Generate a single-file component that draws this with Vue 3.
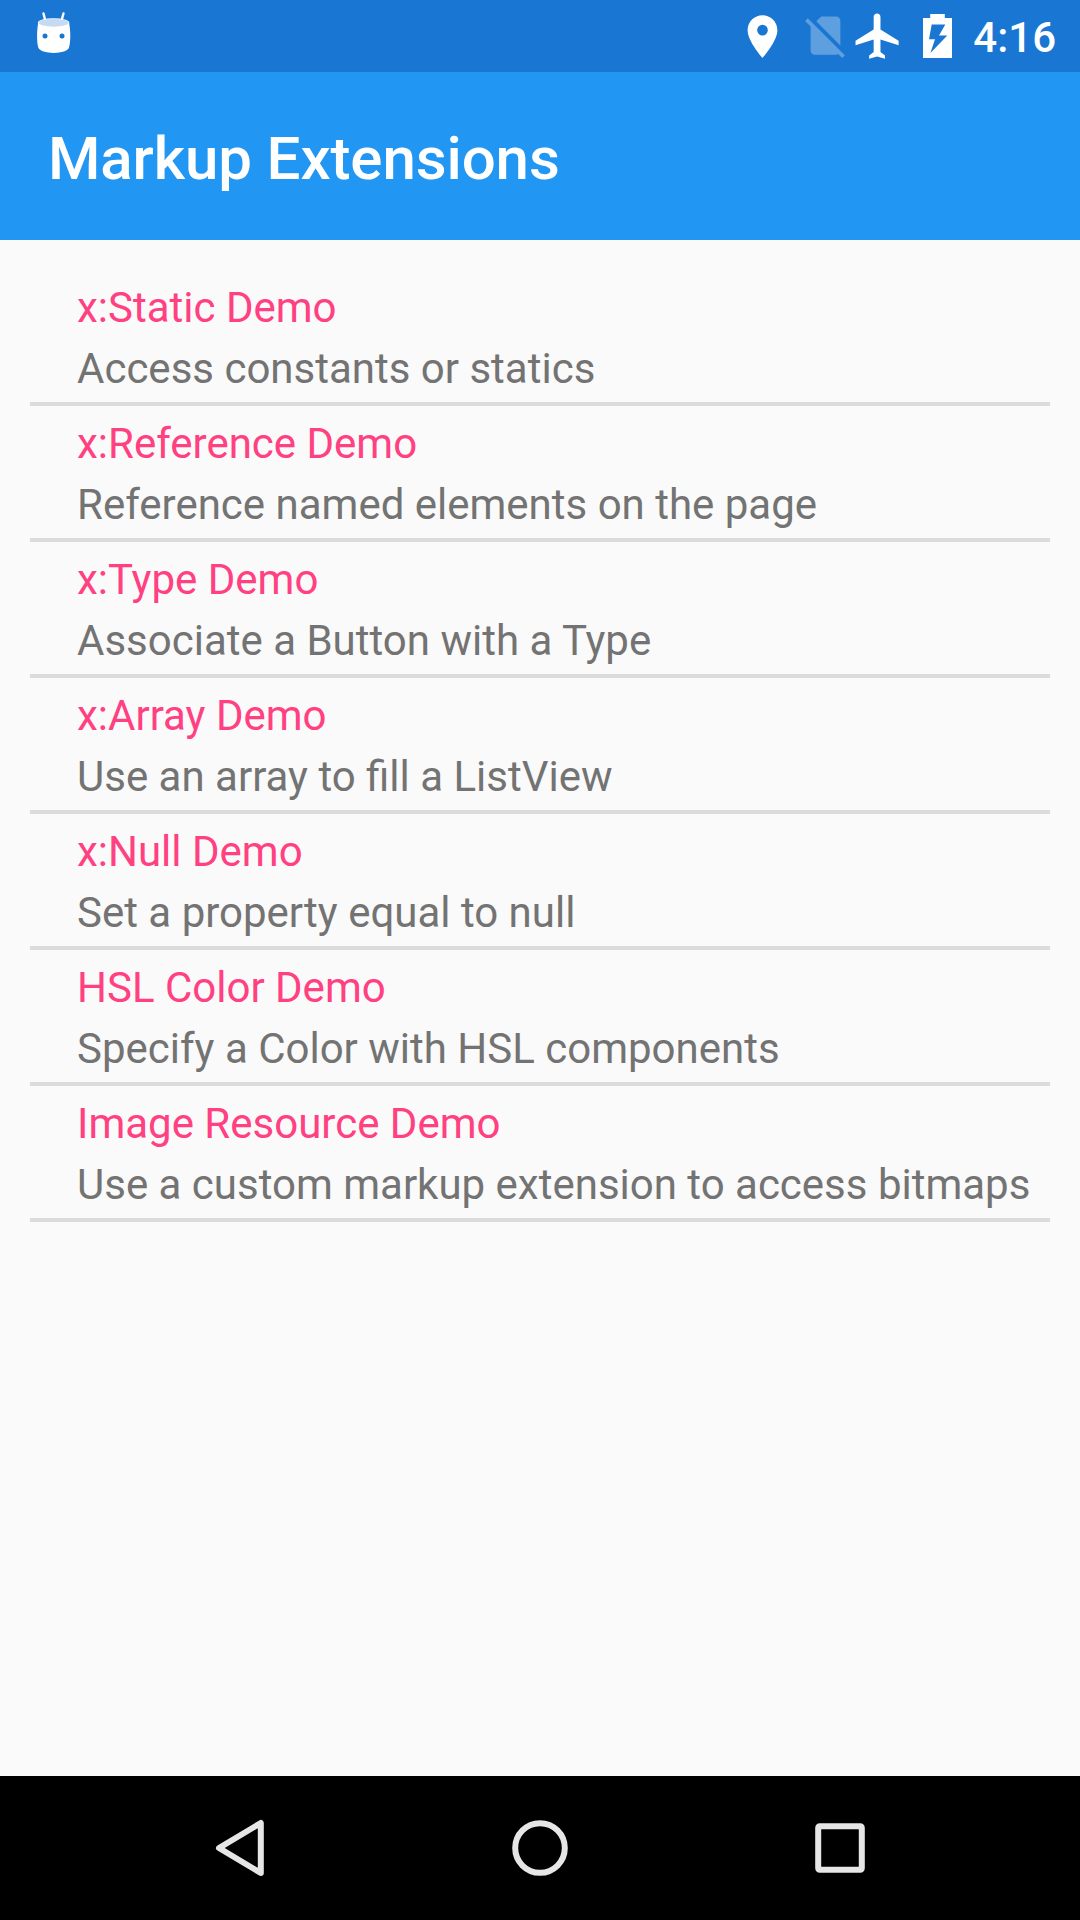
<script setup>
const demos = [
  { title: 'x:Static Demo', detail: 'Access constants or statics' },
  { title: 'x:Reference Demo', detail: 'Reference named elements on the page' },
  { title: 'x:Type Demo', detail: 'Associate a Button with a Type' },
  { title: 'x:Array Demo', detail: 'Use an array to fill a ListView' },
  { title: 'x:Null Demo', detail: 'Set a property equal to null' },
  { title: 'HSL Color Demo', detail: 'Specify a Color with HSL components' },
  { title: 'Image Resource Demo', detail: 'Use a custom markup extension to access bitmaps' },
]
</script>

<template>
  <div class="screen">
    <header class="status">
      <svg class="robot" viewBox="0 0 36 44" width="36" height="44">
        <path d="M7.5 2.5 9.4 10M27.5 2.5 25.4 10" stroke="#fff" stroke-width="2.4" stroke-linecap="round" />
        <path d="M2 13C.7 21 .8 31 2.3 36.500C3.500 40 10 41.900 17.700 41.900S32 40 33 36.500C34.700 31 34.700 21 33.300 13Z" fill="#fff" />
        <ellipse cx="17.600" cy="12" rx="15.800" ry="4.800" fill="#fff" />
        <ellipse cx="17.600" cy="11.800" rx="14.800" ry="3.900" fill="#c6daf3" />
        <circle cx="9" cy="25" r="2.500" fill="#1976d2" />
        <circle cx="26" cy="25" r="2.500" fill="#1976d2" />
      </svg>
      <div class="indicators">
        <svg class="pin" viewBox="0 0 24 24" width="51" height="51">
          <path fill="#fff" d="M12 2C8.130 2 5 5.130 5 9c0 5.250 7 13 7 13s7-7.750 7-13c0-3.870-3.130-7-7-7zm0 9.500a2.500 2.500 0 0 1 0-5 2.500 2.500 0 0 1 0 5z" />
        </svg>
        <svg class="sim" viewBox="0 0 24 24" width="51" height="51">
          <path fill="#fff" fill-opacity=".3" d="M18.990 5c0-1.100-.89-2-1.990-2h-7L7.660 5.340 19 16.680 18.990 5zM3.650 3.880L2.380 5.150 5 7.770V19c0 1.100.9 2 2 2h10.010c.35 0 .67-.1.960-.26l1.880 1.880 1.270-1.270L3.650 3.880z" />
        </svg>
        <svg class="plane" viewBox="0 0 24 24" width="54.400" height="54.400">
          <path fill="#fff" d="M21 16v-2l-8-5V3.500c0-.83-.67-1.500-1.500-1.500S10 2.670 10 3.500V9l-8 5v2l8-2.500V19l-2 1.500V22l3.500-1 3.500 1v-1.500L13 19v-5.500l8 2.500z" />
        </svg>
        <svg class="battery" viewBox="0 0 29 44" width="29" height="44">
          <path fill="#fff" fill-rule="evenodd" d="M7.200 0H21.800V4H29V44H0V4H7.200ZM8.700 10.600 6 25.200H12L7.400 39 24.300 21.500H16L22.300 10.600Z" />
        </svg>
        <span class="clock">4:16</span>
      </div>
    </header>

    <div class="appbar"><h1>Markup Extensions</h1></div>

    <main class="content">
      <ul class="list">
        <li v-for="demo in demos" :key="demo.title" class="row">
          <div class="title">{{ demo.title }}</div>
          <div class="detail">{{ demo.detail }}</div>
        </li>
      </ul>
    </main>

    <nav class="navbar">
      <svg viewBox="0 0 60 60" width="60" height="60" class="key">
        <path d="M50.800 5V55L9 30Z" />
      </svg>
      <svg viewBox="0 0 60 60" width="60" height="60" class="key">
        <circle cx="30" cy="30" r="24.800" />
      </svg>
      <svg viewBox="0 0 60 60" width="60" height="60" class="key">
        <rect x="8.200" y="8.200" width="43.600" height="43.600" rx="1.500" />
      </svg>
    </nav>
  </div>
</template>

<style>
body {
  margin: 0;
}
</style>

<style scoped>
.screen {
  display: flex;
  flex-direction: column;
  width: 1080px;
  height: 1920px;
  background: #fafafa;
  font-family: Roboto, sans-serif;
}
.status {
  display: flex;
  justify-content: space-between;
  align-items: flex-start;
  box-sizing: border-box;
  height: 72px;
  padding: 0 24px 0 36.400px;
  background: #1976d2;
}
.robot {
  margin-top: 11px;
}
.indicators {
  display: flex;
  align-items: flex-start;
}
.pin {
  margin: 10.500px 12.300px 0 0;
}
.sim {
  margin: 9.600px -0.800px 0 0;
}
.plane {
  margin: 8.500px 18.100px 0 0;
}
.battery {
  margin: 14px 21.200px 0 0;
}
.clock {
  margin-top: 12px;
  font-size: 42px;
  line-height: 51px;
  font-weight: 500;
  color: #fff;
}
.appbar {
  display: flex;
  align-items: center;
  box-sizing: border-box;
  height: 168px;
  padding: 5px 48px 0;
  background: #2196f3;
}
h1 {
  margin: 0;
  font-size: 60px;
  line-height: 71px;
  font-weight: 500;
  letter-spacing: -0.1px;
  color: #fff;
}
.content {
  flex: 1;
  padding: 30px;
}
.list {
  margin: 0;
  padding: 0;
  list-style: none;
}
.row {
  box-sizing: border-box;
  height: 136px;
  padding: 7px 0 3px 47px;
  border-bottom: 4px solid #dbdbdb;
  font-size: 42px;
  line-height: 61px;
  white-space: nowrap;
}
.title {
  color: #ff4081;
}
.detail {
  color: #737373;
}
.navbar {
  display: flex;
  justify-content: center;
  align-items: center;
  gap: 240px;
  height: 144px;
  background: #000;
}
.key {
  fill: none;
  stroke: #e6e6e6;
  stroke-width: 6;
  stroke-linejoin: round;
}
</style>
